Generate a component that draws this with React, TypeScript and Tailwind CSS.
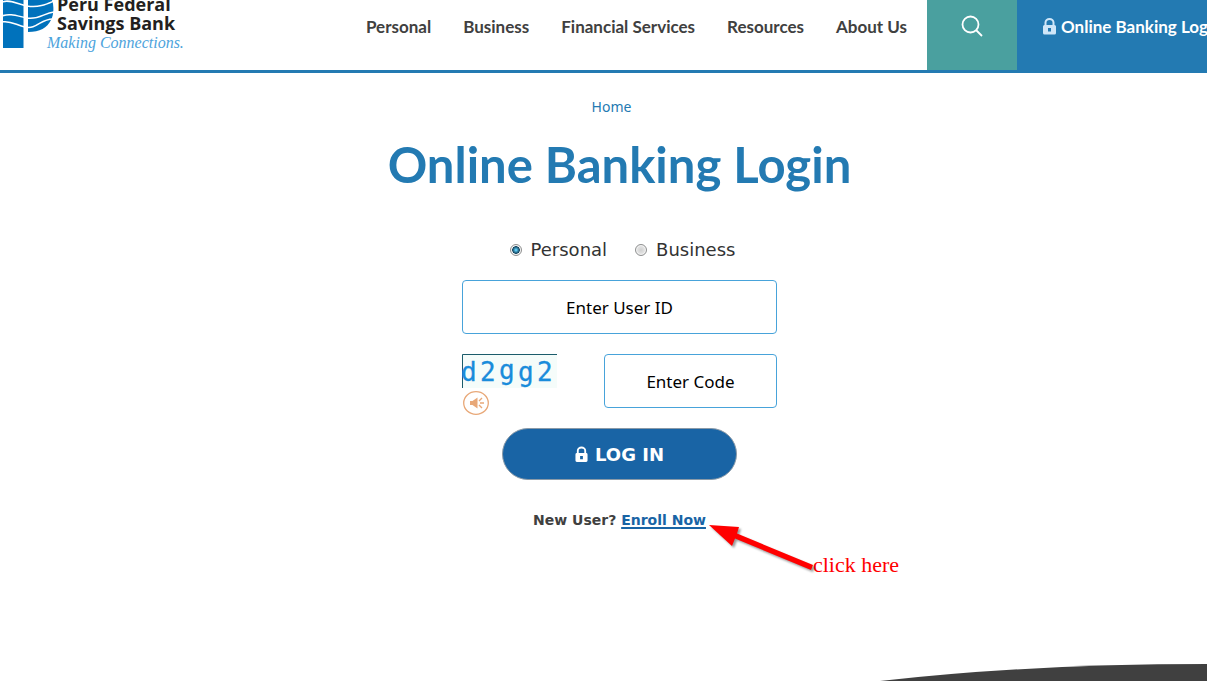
import React, { useState } from 'react';

type AccountType = 'Personal' | 'Business';

const NAV_LINKS = ['Personal', 'Business', 'Financial Services', 'Resources', 'About Us'];
const ACCOUNT_TYPES: AccountType[] = ['Personal', 'Business'];

const LockIcon: React.FC<{ className?: string }> = ({ className }) => (
  <svg viewBox="0 0 14 17" className={className} aria-hidden="true">
    <path d="M3 8V4.500a4 3.500 0 0 1 8 0V8" fill="none" stroke="currentColor" strokeWidth="2" />
    <path
      d="M2 7h10a1.500 1.500 0 0 1 1.500 1.500v6.500A1.500 1.500 0 0 1 12 16.500H2A1.500 1.500 0 0 1 .5 15V8.500A1.500 1.500 0 0 1 2 7ZM5.500 10v3.500h3V10Z"
      fill="currentColor"
      fillRule="evenodd"
    />
  </svg>
);

const Logo: React.FC = () => (
  <a href="#" className="flex shrink-0 pl-[3px]" aria-label="Peru Federal Savings Bank">
    <svg viewBox="0 0 51 48" className="h-[48px] w-[51px] shrink-0" aria-hidden="true">
      <path d="M0 0h20.500v48H0Z" fill="#0072bc" />
      <path d="M25 0h24c2 6 2 14-1 20C44 28 37 32 25 32Z" fill="#0072bc" />
      <g fill="none" stroke="#fff" strokeWidth="1.500">
        <path d="M-1 2C7-1 14 4 24 6C36 8 44 4 51 1" />
        <path d="M-1 16C7 13 14 16 24 18C36 20 41 13 51 12" />
        <path d="M-1 22C7 20 13 25 22 27C34 30 38 18 51 19" />
      </g>
    </svg>
    <span className="flex flex-col">
      <span className="-mt-[5px] flex flex-col pl-[3px] font-['Open_Sans',sans-serif] text-[18px] leading-[19px] font-bold text-[#231f20]">
        <span>Peru Federal</span>
        <span>Savings Bank</span>
      </span>
      <span className="-ml-[7px] font-['Liberation_Serif',serif] text-[16px] leading-[20px] font-normal text-[#4da3dc] italic">
        Making Connections.
      </span>
    </span>
  </a>
);

const Header: React.FC = () => (
  <header className="flex h-[73px] overflow-hidden border-b-[3px] border-[#237ab2] bg-white font-['Lato',sans-serif] text-[17px] font-bold whitespace-nowrap">
    <Logo />
    <nav className="ml-auto flex h-[53px] shrink-0 items-center gap-8 pr-5 text-[#404040]">
      {NAV_LINKS.map(link => (
        <a key={link} href="#">{link}</a>
      ))}
    </nav>
    <button type="button" aria-label="Search" className="flex w-[90px] shrink-0 justify-center bg-[#4aa09f] pt-[15px] text-white">
      <svg viewBox="0 0 22 22" className="h-[22px] w-[22px]" fill="none" stroke="currentColor" strokeWidth="1.800">
        <circle cx="9.500" cy="9.500" r="8" />
        <path d="m15 15 6 6" />
      </svg>
    </button>
    <a href="#" className="flex w-[190px] shrink-0 bg-[#237ab2] pl-[25px] text-white">
      <span className="flex h-[53px] items-center gap-1">
        <LockIcon className="h-[17px] w-[15px] text-[#cfe6f8]" />
        Online Banking Login
      </span>
    </a>
  </header>
);

const Captcha: React.FC<{ code: string }> = ({ code }) => (
  <div>
    <svg viewBox="0 0 95 34" className="h-[34px] w-[95px]" role="img" aria-label="Verification code">
      <path d="M0 0h95v34H0Z" fill="#f5fcfa" />
      <path d="M.5 34V.5H95" fill="none" stroke="#1b5c6b" />
      <text
        x="-1 18 37 56 75"
        y="27 27 25 27 27"
        fontFamily="DejaVu Sans Mono, monospace"
        fontSize="26"
        fill="#1a8cdb"
        stroke="#1a8cdb"
        strokeWidth=".3"
      >
        {code}
      </text>
    </svg>
    <button type="button" aria-label="Listen to the code" className="mt-[3px] ml-px block">
      <svg viewBox="0 0 26 24" className="h-[24px] w-[26px]" fill="none" stroke="#e8a878">
        <ellipse cx="13" cy="12" rx="12.300" ry="11.300" strokeWidth="1.300" />
        <path d="M7 10h2.500l5-3.500v11l-5-3.500H7Z" fill="#e8a878" stroke="none" />
        <path d="M17 12h4M16 10l3-3M16 14l3 3" strokeWidth="1.400" />
      </svg>
    </button>
  </div>
);

const Pointer: React.FC = () => (
  <div className="absolute top-[14px] left-full ml-[3px] flex items-start">
    <svg viewBox="0 0 104 52" className="h-[52px] w-[104px] drop-shadow-[2px_2px_1px_#00000066]" aria-hidden="true">
      <path d="M0 1 30 3 28 9.500 104 41 102 46 26 14.500 23 22Z" fill="#f00" />
    </svg>
    <span className="mt-[28px] font-['Liberation_Serif',serif] text-[22px] leading-[26px] font-normal whitespace-nowrap text-[#f00]">
      click here
    </span>
  </div>
);

const LoginForm: React.FC = () => {
  const [accountType, setAccountType] = useState<AccountType>('Personal');
  const [userId, setUserId] = useState('');
  const [code, setCode] = useState('');

  return (
    <form className="flex w-[315px] flex-col items-center" onSubmit={e => e.preventDefault()}>
      <div className="flex gap-7 pl-1.5 font-['DejaVu_Sans',sans-serif] text-[18px] leading-6 text-[#333]">
        {ACCOUNT_TYPES.map(type => (
          <label key={type} className="flex items-center gap-[9px]">
            <input
              type="radio"
              name="accountType"
              checked={accountType === type}
              onChange={() => setAccountType(type)}
              className="h-3 w-3 appearance-none rounded-full border border-[#8e8f8f] bg-radial from-[#d0d0d0] to-[#f4f4f4] shadow-[inset_0_0_0_1px_#f4f4f4] checked:from-[#5cc8f0] checked:from-10% checked:via-[#12445f] checked:via-50% checked:to-[#f4f4f4] checked:to-60%"
            />
            {type}
          </label>
        ))}
      </div>

      <input
        type="text"
        aria-label="Enter User ID"
        placeholder="Enter User ID"
        value={userId}
        onChange={e => setUserId(e.target.value)}
        className="mt-[18px] h-[54px] w-full rounded border border-[#47a3da] bg-white text-center font-['Noto_Sans',sans-serif] text-[17px] text-black placeholder:text-black"
      />

      <div className="mt-5 flex w-full justify-between">
        <Captcha code="d2gg2" />
        <input
          type="text"
          aria-label="Enter Code"
          placeholder="Enter Code"
          value={code}
          onChange={e => setCode(e.target.value)}
          className="h-[54px] w-[173px] rounded border border-[#47a3da] bg-white text-center font-['Noto_Sans',sans-serif] text-[17px] text-black placeholder:text-black"
        />
      </div>

      <button
        type="submit"
        className="mt-[13px] flex h-[52px] w-[235px] items-center justify-center gap-[7px] rounded-full border border-[#8a9aa8] bg-[#1964a5] font-['DejaVu_Sans',sans-serif] text-[18px] font-bold text-white"
      >
        <LockIcon className="h-[17px] w-[13px]" />
        LOG IN
      </button>

      <p className="relative mt-[30px] font-['DejaVu_Sans',sans-serif] text-[14px] leading-5 font-bold whitespace-nowrap text-[#404040]">
        New User?{' '}
        <a href="#" className="text-[#1964a5] underline decoration-2 underline-offset-2">Enroll Now</a>
        <Pointer />
      </p>
    </form>
  );
};

const App: React.FC = () => {
  return (
    <div className="flex min-h-screen flex-col overflow-hidden bg-white">
      <Header />

      <main className="flex flex-col items-center pt-[22px] pl-8">
        <a href="#" className="mr-4 font-['Noto_Sans',sans-serif] text-[14px] leading-6 text-[#237ab2]">Home</a>
        <h1 className="mt-[11px] font-['Lato',sans-serif] text-[49px] leading-[68px] font-bold text-[#237ab2]">
          Online Banking Login
        </h1>
        <div className="mt-10">
          <LoginForm />
        </div>
      </main>

      {/* Curved top edge of the footer */}
      <footer className="mt-auto flex justify-end">
        <svg viewBox="0 0 327 17" className="h-[17px] w-[327px]" aria-hidden="true">
          <path d="M0 17Q150 0 327 0V17Z" fill="#404040" />
        </svg>
      </footer>
    </div>
  );
};

export default App;
